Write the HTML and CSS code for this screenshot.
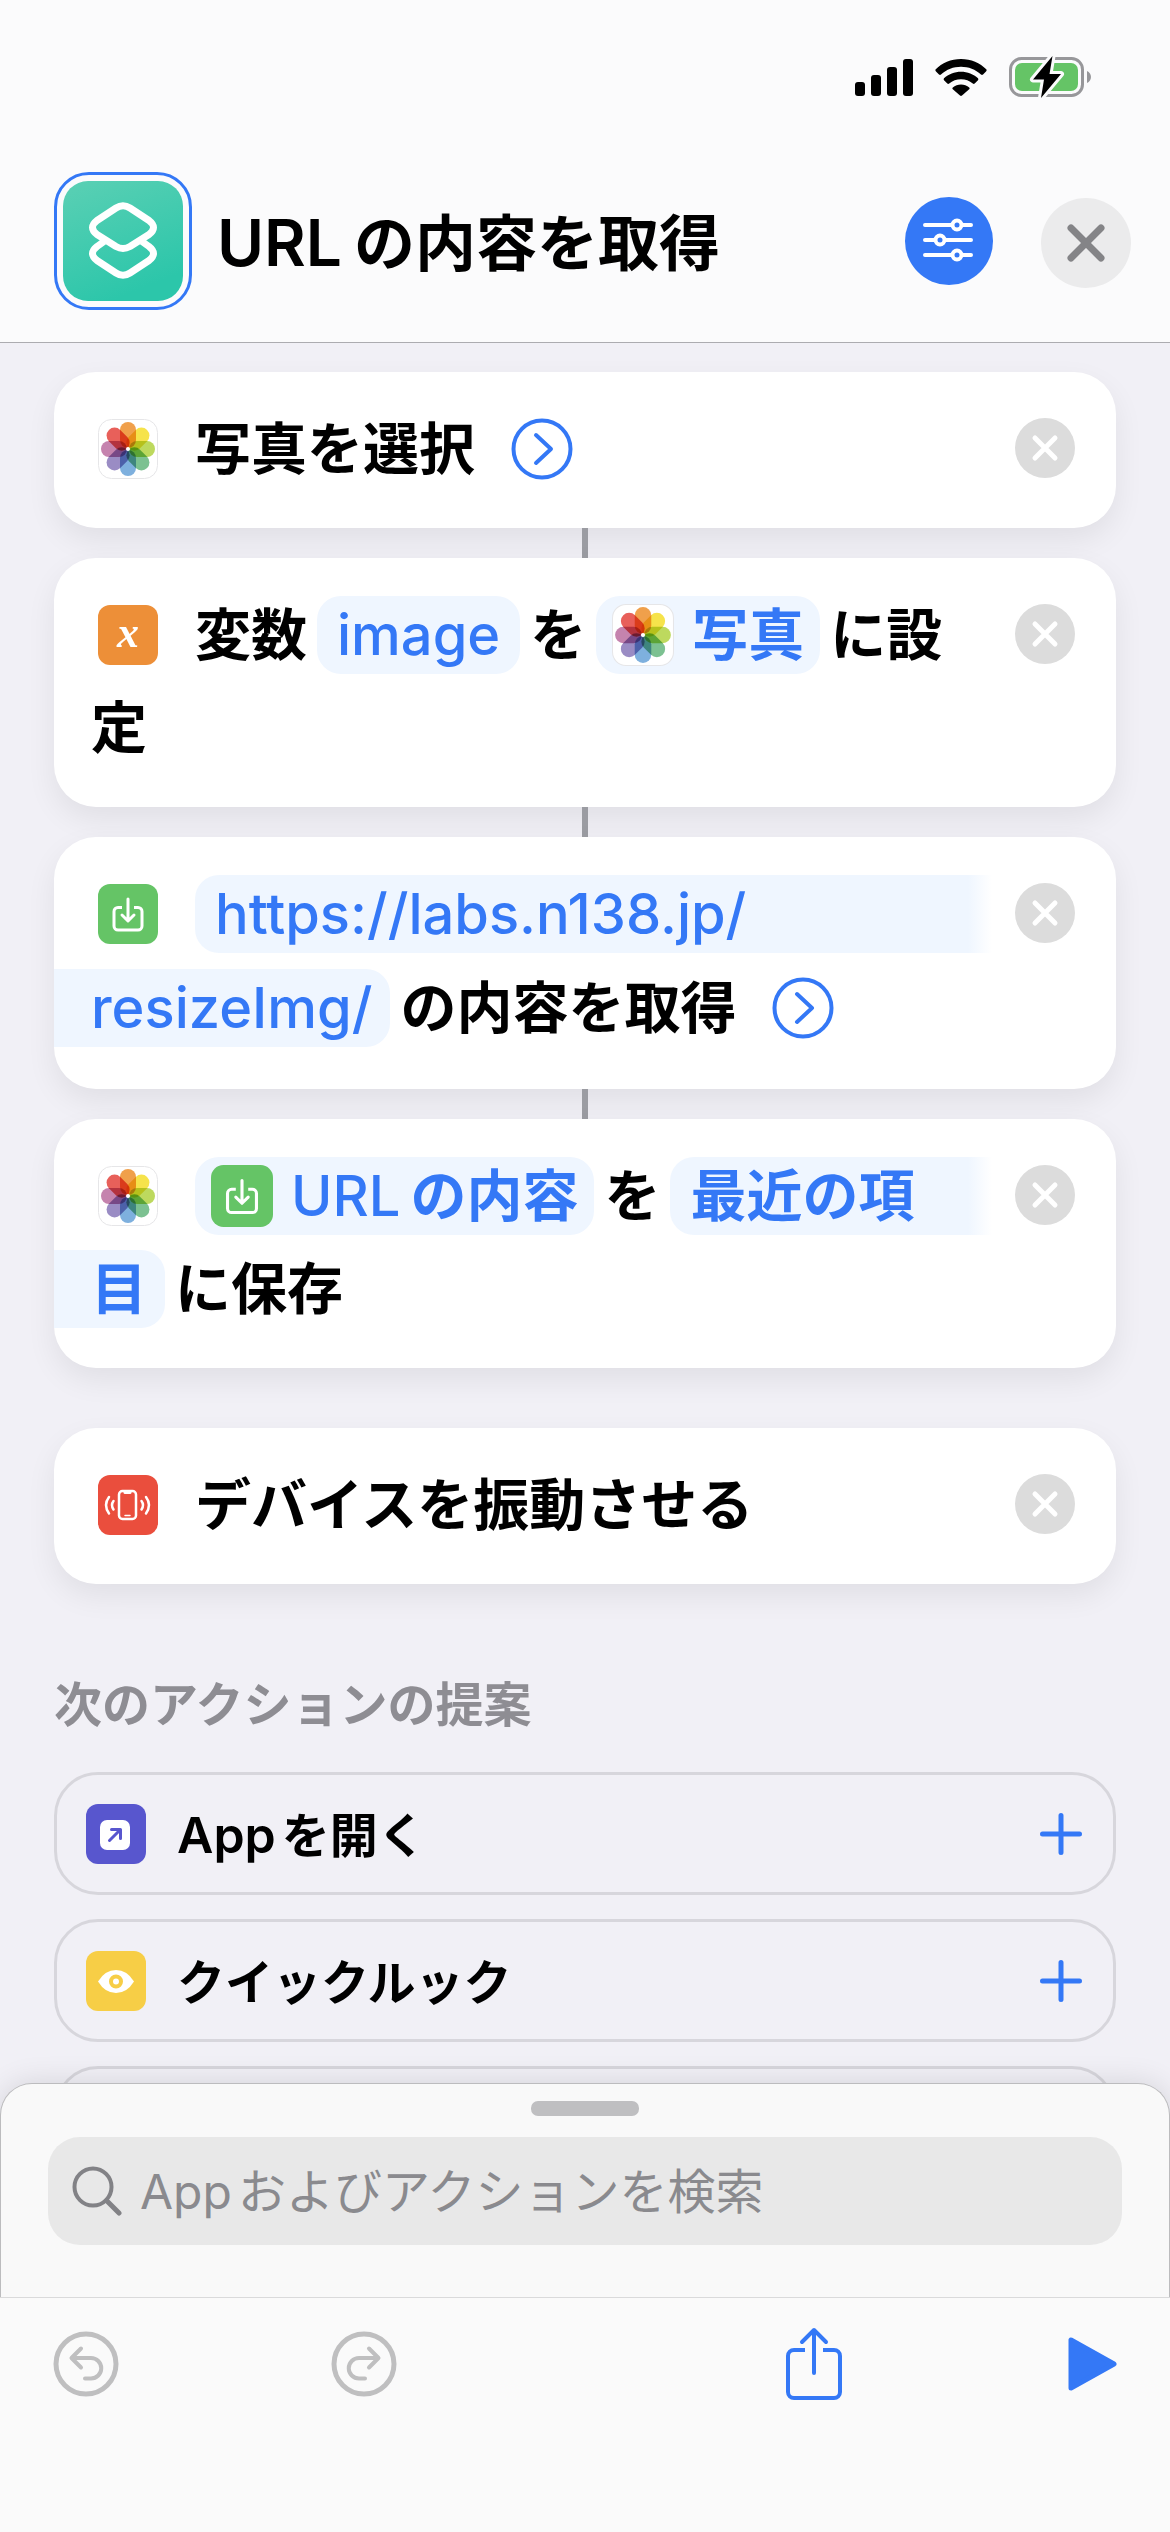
FILE: index.html
```html
<!DOCTYPE html>
<html lang="ja">
<head>
<meta charset="utf-8">
<meta name="viewport" content="width=device-width, initial-scale=1">
<title>URLの内容を取得</title>
<link rel="stylesheet" href="styles.css">
</head>
<body>
<svg class="sprite" aria-hidden="true">
  <defs>
    <symbol id="photos" viewBox="0 0 60 60">
      <rect x="0.5" y="0.5" width="59" height="59" rx="13" fill="#fff" stroke="#e6e6e8"/>
      <g class="petals">
        <rect x="22" y="3" width="16" height="26" rx="8" fill="#f0a04b"/>
        <rect x="22" y="3" width="16" height="26" rx="8" fill="#f6e34b" transform="rotate(45 30 30)"/>
        <rect x="22" y="3" width="16" height="26" rx="8" fill="#bdd95e" transform="rotate(90 30 30)"/>
        <rect x="22" y="3" width="16" height="26" rx="8" fill="#7cc191" transform="rotate(135 30 30)"/>
        <rect x="22" y="3" width="16" height="26" rx="8" fill="#7eb0de" transform="rotate(180 30 30)"/>
        <rect x="22" y="3" width="16" height="26" rx="8" fill="#9a8cc4" transform="rotate(225 30 30)"/>
        <rect x="22" y="3" width="16" height="26" rx="8" fill="#c583ae" transform="rotate(270 30 30)"/>
        <rect x="22" y="3" width="16" height="26" rx="8" fill="#e8605a" transform="rotate(315 30 30)"/>
      </g>
      <circle cx="30" cy="30" r="2" fill="#fff"/>
    </symbol>
    <symbol id="download" viewBox="0 0 60 60">
      <rect width="60" height="60" rx="12" fill="#65c466"/>
      <g fill="none" stroke="#fff" stroke-width="3" stroke-linecap="round" stroke-linejoin="round">
        <path d="M24 23.500H20a4 4 0 0 0-4 4V42a4 4 0 0 0 4 4H40a4 4 0 0 0 4-4V27.500a4 4 0 0 0-4-4H36" stroke-linecap="butt"/>
        <path d="M30 15V36M24 31L30 37L36 31"/>
      </g>
    </symbol>
    <symbol id="delete" viewBox="0 0 60 60">
      <circle cx="30" cy="30" r="30" fill="#dcdcdc"/>
      <path d="M20 20L40 40M40 20L20 40" stroke="#fff" stroke-width="5" stroke-linecap="round"/>
    </symbol>
    <symbol id="chevron" viewBox="0 0 62 62">
      <g fill="none" stroke="#3478f6" stroke-width="4" stroke-linecap="round" stroke-linejoin="round">
        <circle cx="31" cy="31" r="28.500"/>
        <path d="M25 17L40 31L25 45"/>
      </g>
    </symbol>
    <symbol id="plus" viewBox="0 0 42 42">
      <path d="M21 2.500V39.500M2.500 21H39.500" stroke="#3478f6" stroke-width="5" stroke-linecap="round"/>
    </symbol>
  </defs>
</svg>

<header class="header">
  <div class="status">
    <svg class="status-signal" viewBox="0 0 58 37" aria-label="電波"><rect y="23" width="10" height="14" rx="3"/><rect x="16" y="16" width="10" height="21" rx="3"/><rect x="32" y="8" width="10" height="29" rx="3"/><rect x="48" width="10" height="37" rx="3"/></svg>
    <svg class="status-wifi" viewBox="0 0 52 37" aria-label="Wi-Fi"><path d="M26 0C36 0 45 4 51.500 10.500Q52 11.500 51 12.500L48 15.500Q47 16.300 46 15.500C40.500 10.500 33.500 7.800 26 7.800S11.500 10.500 6 15.500Q5 16.300 4 15.500L1 12.500Q0 11.500.5 10.500C7 4 16 0 26 0Z"/><path d="M26 12.800C32.500 12.800 38.500 15.200 43 19.300Q43.800 20.300 43 21.200L39.700 24.500Q38.700 25.300 37.800 24.500C34.500 21.800 30.500 20.300 26 20.300S17.500 21.800 14.200 24.500Q13.300 25.300 12.300 24.500L9 21.200Q8.200 20.300 9 19.300C13.500 15.200 19.500 12.800 26 12.800Z"/><path d="M26 25.500C29 25.500 32 26.600 34.200 28.500Q35 29.400 34.200 30.300L27 36.600Q26 37.400 25 36.600L17.800 30.300Q17 29.400 17.800 28.500C20 26.600 23 25.500 26 25.500Z"/></svg>
    <svg class="status-battery" viewBox="0 0 82 42" aria-label="充電中"><rect x="1.500" y="2.500" width="72" height="37" rx="11" fill="none" stroke="#97979a" stroke-width="3"/><path d="M78 15C80.500 16 82 18.500 82 21S80.500 26 78 27Z" fill="#97979a"/><rect x="6" y="7" width="63" height="28" rx="7" fill="#65c466"/><path d="M43.500 0L24 23.500H35L32 42L52 18H40.500Z" stroke="#fbfbfc" stroke-width="6" stroke-linejoin="round"/><path d="M43.500 0L24 23.500H35L32 42L52 18H40.500Z"/></svg>
  </div>
  <div class="titlebar">
    <button class="app-icon" aria-label="アイコンを変更">
      <svg viewBox="0 0 120 120"><defs><linearGradient id="teal" x1="0" y1="0" x2="0.4" y2="1"><stop offset="0" stop-color="#5bd0b4"/><stop offset="1" stop-color="#2cc6aa"/></linearGradient></defs><rect width="120" height="120" rx="25" fill="url(#teal)"/><g fill="none" stroke="#fff" stroke-width="7" stroke-linejoin="round"><path d="M53 27L34 39.500Q25 46.500 34 53.500L53 65.500Q60 69.500 67 65.500L86 53.500Q95 46.500 86 39.500L67 27Q60 22.500 53 27Z"/><path d="M41 60.500L34 65.500Q25 72.500 34 79.500L53 92Q60 96.500 67 92L86 79.500Q95 72.500 86 65.500L79 60.500"/></g></svg>
    </button>
    <h1 class="title"><span class="title-latin">URL</span>の内容を取得</h1>
    <button class="settings" aria-label="設定"><svg viewBox="0 0 88 88" fill="none" stroke="#fff" stroke-width="4" stroke-linecap="round"><path d="M20 28H47M57 28H66M20 43H30M40 43H66M20 58H47M57 58H66"/><circle cx="52" cy="28" r="4.500"/><circle cx="35" cy="43" r="4.500"/><circle cx="52" cy="58" r="4.500"/></svg></button>
    <button class="close" aria-label="閉じる"><svg viewBox="0 0 90 90"><path d="M30 30L60 60M60 30L30 60" stroke="#848487" stroke-width="7" stroke-linecap="round"/></svg></button>
  </div>
</header>

<main class="main">
  <ol class="actions">
    <li class="card linked">
      <div class="lines">
        <div class="line"><svg class="icon"><use href="#photos"/></svg><span>写真を選択</span><button class="more" aria-label="詳細を表示"><svg><use href="#chevron"/></svg></button></div>
      </div>
      <button class="delete" aria-label="削除"><svg><use href="#delete"/></svg></button>
    </li>
    <li class="card linked">
      <div class="lines">
        <div class="line"><svg class="icon" viewBox="0 0 60 60"><rect width="60" height="60" rx="12" fill="#ed8f38"/><text x="30" y="42" class="glyph-x">x</text></svg><span>変数</span><button class="token latin">image</button><span>を</span><button class="token has-icon"><svg class="token-icon"><use href="#photos"/></svg>写真</button><span>に設</span></div>
        <div class="line"><span>定</span></div>
      </div>
      <button class="delete" aria-label="削除"><svg><use href="#delete"/></svg></button>
    </li>
    <li class="card linked roomy">
      <div class="lines">
        <div class="line"><svg class="icon"><use href="#download"/></svg><button class="token latin opens">https://labs.n138.jp/</button></div>
        <div class="line"><button class="token latin ends">resizeImg/</button><span>の内容を取得</span><button class="more" aria-label="詳細を表示"><svg><use href="#chevron"/></svg></button></div>
      </div>
      <button class="delete" aria-label="削除"><svg><use href="#delete"/></svg></button>
    </li>
    <li class="card">
      <div class="lines">
        <div class="line"><svg class="icon"><use href="#photos"/></svg><button class="token has-icon"><svg class="token-icon"><use href="#download"/></svg><span class="latin">URL</span>の内容</button><span>を</span><button class="token opens">最近の項</button></div>
        <div class="line"><button class="token ends">目</button><span>に保存</span></div>
      </div>
      <button class="delete" aria-label="削除"><svg><use href="#delete"/></svg></button>
    </li>
    <li class="card separate">
      <div class="lines">
        <div class="line"><svg class="icon" viewBox="0 0 60 60"><rect width="60" height="60" rx="12" fill="#ea4e3d"/><g fill="none" stroke="#fff" stroke-width="2.500" stroke-linecap="round"><rect x="21" y="16" width="17" height="28" rx="3.500"/><path d="M27 17.500H32" stroke-width="3"/><path d="M27 40.500H32" stroke-width="1.500"/><path d="M15.500 26Q12.500 30 15.500 34.500M11 22Q5 30 11 38.500M43.500 26Q46.500 30 43.500 34.500M48 22Q54 30 48 38.500"/></g></svg><span>デバイスを振動させる</span></div>
      </div>
      <button class="delete" aria-label="削除"><svg><use href="#delete"/></svg></button>
    </li>
  </ol>

  <section class="suggestions">
    <h2 class="section-title">次のアクションの提案</h2>
    <ul class="suggestion-list">
      <li><button class="suggestion"><svg class="suggestion-icon" viewBox="0 0 60 60"><rect width="60" height="60" rx="12" fill="#5856ce"/><rect x="14" y="16" width="30" height="30" rx="7" fill="#fff"/><path d="M23.500 36.500L34 26M25.500 25.500H34.500V34.500" fill="none" stroke="#5856ce" stroke-width="3" stroke-linecap="round" stroke-linejoin="round"/></svg><span class="suggestion-name"><span class="suggestion-latin">App</span>を開く</span><svg class="plus"><use href="#plus"/></svg></button></li>
      <li><button class="suggestion"><svg class="suggestion-icon" viewBox="0 0 60 60"><rect width="60" height="60" rx="12" fill="#f7ce46"/><path d="M12 30.500Q19 19 30 19T48 30.500Q41 42 30 42T12 30.500Z" fill="#fff"/><circle cx="30" cy="30.500" r="5" fill="none" stroke="#f7ce46" stroke-width="4"/></svg><span class="suggestion-name">クイックルック</span><svg class="plus"><use href="#plus"/></svg></button></li>
      <li><div class="suggestion"></div></li>
    </ul>
  </section>
</main>

<footer class="dock">
  <div class="sheet">
    <div class="grabber"></div>
    <label class="search">
      <svg class="search-icon" viewBox="0 0 50 50" fill="none" stroke="#828286" stroke-width="4" stroke-linecap="round"><circle cx="21" cy="21" r="18.500"/><path d="M34.500 34.500L47 47" stroke-width="5"/></svg>
      <input class="search-input" type="search" placeholder="Appおよびアクションを検索" aria-label="Appおよびアクションを検索">
    </label>
  </div>
  <nav class="toolbar">
    <button class="tool" aria-label="取り消す"><svg viewBox="0 0 66 66" fill="none" stroke="#bfbfc0" stroke-width="4" stroke-linecap="round" stroke-linejoin="round"><circle cx="33" cy="33" r="30" stroke-width="5"/><path d="M28 17.500L18.500 27L28 36.500M19.500 27H38A10 10 0 0 1 38 47.500H32"/></svg></button>
    <button class="tool" aria-label="やり直す"><svg viewBox="0 0 66 66" fill="none" stroke="#bfbfc0" stroke-width="4" stroke-linecap="round" stroke-linejoin="round"><circle cx="33" cy="33" r="30" stroke-width="5"/><path d="M38 17.500L47.500 27L38 36.500M46.500 27H28A10 10 0 0 0 28 47.500H34"/></svg></button>
    <button class="tool share" aria-label="共有"><svg viewBox="0 0 58 74" fill="none" stroke="#3478f6" stroke-width="4" stroke-linecap="round" stroke-linejoin="round"><path d="M20 23H9A6 6 0 0 0 3 29V65A6 6 0 0 0 9 71H49A6 6 0 0 0 55 65V29A6 6 0 0 0 49 23H38" stroke-linecap="butt"/><path d="M29 46V3M17 15L29 3L41 15"/></svg></button>
    <button class="tool play" aria-label="実行"><svg viewBox="0 0 50 56"><path d="M4 4V52L47 28Z" fill="#3478f6" stroke="#3478f6" stroke-width="5" stroke-linejoin="round"/></svg></button>
  </nav>
</footer>
</body>
</html>
```
FILE: styles.css
```css
* {
  box-sizing: border-box;
}

body {
  margin: 0;
  min-height: 100vh;
  background: #f1f0f6;
  color: #000;
  font-family: Inter, "Noto Sans CJK JP", sans-serif;
  text-autospace: no-autospace;
}

button {
  margin: 0;
  padding: 0;
  border: 0;
  background: none;
  color: inherit;
  font: inherit;
}

svg {
  display: block;
  flex: none;
}

ol,
ul {
  margin: 0;
  padding: 0;
  list-style: none;
}

.sprite {
  position: absolute;
  width: 0;
  height: 0;
}

.petals rect {
  mix-blend-mode: multiply;
}

/* Header */

.header {
  position: sticky;
  top: 0;
  z-index: 1;
  height: 343px;
  border-bottom: 1px solid #acacb0;
  background: #fbfbfc;
}

.status {
  display: flex;
  justify-content: flex-end;
  align-items: center;
  gap: 22px;
  padding: 56px 79px 0 0;
}

.status-signal {
  width: 58px;
  height: 37px;
}

.status-wifi {
  width: 52px;
  height: 37px;
}

.status-battery {
  width: 82px;
  height: 42px;
}

.titlebar {
  display: flex;
  align-items: center;
  padding: 74px 39px 0 54px;
}

.app-icon {
  padding: 6px;
  border: 3px solid #3478f6;
  border-radius: 35px;
}

.app-icon svg {
  width: 120px;
  height: 120px;
}

.title {
  flex: 1;
  display: flex;
  align-items: baseline;
  gap: 12px;
  margin: 4px 0 0 25px;
  font-size: 61px;
  font-weight: 700;
  line-height: 90px;
  white-space: nowrap;
}

.title-latin {
  font-size: 64px;
  font-weight: 600;
}

.settings {
  margin-right: 48px;
  border-radius: 50%;
  background: #3478f6;
}

.settings svg {
  width: 88px;
  height: 88px;
}

.close {
  margin-top: 4px;
  border-radius: 50%;
  background: #ebebec;
}

.close svg {
  width: 90px;
  height: 90px;
}

/* Action cards */

.main {
  padding: 29px 54px 0;
}

.actions {
  display: flex;
  flex-direction: column;
  gap: 30px;
}

.card {
  position: relative;
  display: flex;
  align-items: flex-start;
  gap: 23px;
  padding: 30px 41px 33px 0;
  border-radius: 42px;
  background: #fff;
  box-shadow: 0 12px 30px rgba(0, 0, 0, 0.07);
  font-size: 56px;
  font-weight: 700;
}

.linked::after {
  content: "";
  position: absolute;
  top: 100%;
  left: 50%;
  width: 6px;
  height: 30px;
  margin-left: -3px;
  background: #9b9ca2;
}

.separate {
  margin-top: 30px;
}

.lines {
  flex: 1;
  min-width: 0;
}

.line {
  display: flex;
  align-items: center;
  height: 93px;
  padding-left: 37px;
  line-height: 78px;
  white-space: nowrap;
}

.roomy {
  padding-bottom: 34px;
}

.roomy .line {
  height: 94px;
}

.icon {
  width: 60px;
  height: 60px;
  margin: 0 37px 0 7px;
}

.glyph-x {
  fill: #fff;
  font: italic 700 44px "Liberation Serif", serif;
  text-anchor: middle;
}

.token {
  display: flex;
  align-items: center;
  height: 78px;
  margin: 0 10px;
  padding: 0 20px;
  border-radius: 24px;
  background: #eff6ff;
  color: #3478f6;
}

.latin {
  font-size: 56px;
  font-weight: 500;
}

.icon + .token {
  margin-left: 0;
}

.token .latin {
  margin-right: 10px;
}

.has-icon {
  padding: 0 16px;
}

.token-icon {
  width: 62px;
  height: 62px;
  margin-right: 18px;
}

.opens {
  flex: 1;
  margin-right: 0;
  border-radius: 24px 0 0 24px;
  background: linear-gradient(to left, #fff, #eff6ff 24px);
}

.ends {
  margin-left: -37px;
  padding: 0 18px 0 37px;
  border-radius: 0 24px 24px 0;
}

.more {
  margin-left: 36px;
}

.more svg {
  width: 62px;
  height: 62px;
}

.delete {
  margin-top: 16px;
}

.delete svg {
  width: 60px;
  height: 60px;
}

/* Suggestions */

.section-title {
  margin: 84px 0 30px;
  color: #8e8d93;
  font-size: 48px;
  font-weight: 700;
  line-height: 74px;
}

.suggestion-list {
  display: flex;
  flex-direction: column;
  gap: 24px;
}

.suggestion {
  display: flex;
  align-items: center;
  width: 100%;
  height: 123px;
  padding: 0 31px 0 29px;
  border: 3px solid #d7d6dc;
  border-radius: 44px;
  font-size: 48px;
  font-weight: 700;
  text-align: left;
}

.suggestion-icon {
  width: 60px;
  height: 60px;
}

.suggestion-name {
  flex: 1;
  display: flex;
  align-items: baseline;
  margin-left: 31px;
  padding-bottom: 4px;
}

.suggestion-latin {
  margin-right: 6px;
  font-size: 50px;
  font-weight: 600;
}

.plus {
  width: 42px;
  height: 42px;
}

/* Search sheet and toolbar */

.dock {
  position: fixed;
  right: 0;
  bottom: 0;
  left: 0;
  z-index: 1;
}

.sheet {
  padding: 17px 47px 52px;
  border: 1px solid #bcbcbe;
  border-bottom: 0;
  border-radius: 32px 32px 0 0;
  background: #f9f9f9;
  box-shadow: 0 0 30px rgba(0, 0, 0, 0.12);
}

.grabber {
  width: 108px;
  height: 15px;
  margin: 0 auto 21px;
  border-radius: 7px;
  background: #bfbfc1;
}

.search {
  display: flex;
  align-items: center;
  gap: 18px;
  height: 108px;
  padding: 0 24px;
  border-radius: 32px;
  background: #e8e8e8;
}

.search-icon {
  width: 50px;
  height: 50px;
}

.search-input {
  flex: 1;
  min-width: 0;
  height: 74px;
  padding: 0;
  border: 0;
  outline: 0;
  background: none;
  font: 400 48px Inter, "Noto Sans CJK JP", sans-serif;
  text-autospace: normal;
}

.search-input::placeholder {
  color: #8a8a8e;
  opacity: 1;
}

.toolbar {
  position: relative;
  display: flex;
  align-items: flex-start;
  height: 235px;
  padding: 28px 53px 0;
  border-top: 1px solid #dadadb;
  background: #fafafa;
}

.tool {
  display: flex;
  align-items: center;
  height: 76px;
}

.tool svg {
  width: 66px;
  height: 66px;
}

.tool + .tool {
  margin-left: 212px;
}

.tool + .share {
  margin-left: auto;
}

.share svg {
  width: 58px;
  height: 74px;
}

.tool + .play {
  margin-left: 224px;
}

.play svg {
  width: 50px;
  height: 56px;
}
```
